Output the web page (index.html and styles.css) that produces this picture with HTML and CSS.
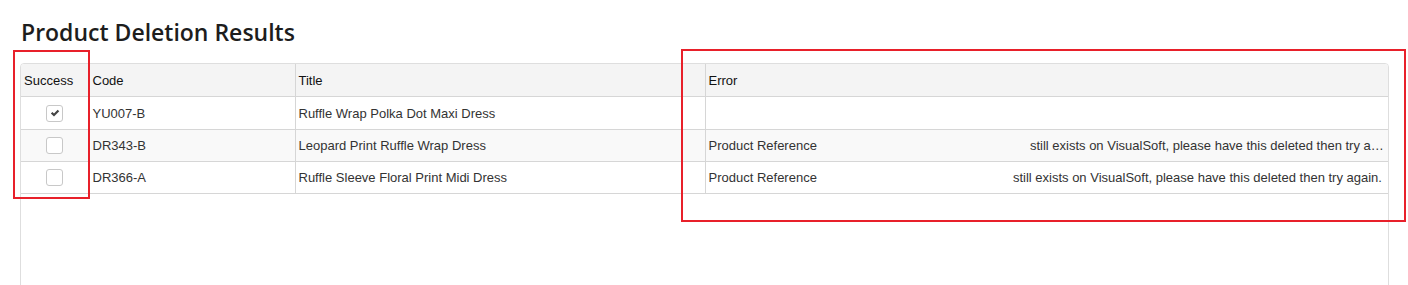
FILE: index.html
```html
<!DOCTYPE html>
<html lang="en">
<head>
    <meta charset="UTF-8">
    <meta name="viewport" content="width=device-width, initial-scale=1.0">
    <title>Product Deletion Results</title>
    <link rel="stylesheet" href="styles.css">
</head>
<body>
    <div class="page">
        <h1>Product Deletion Results</h1>

        <div class="grid">
            <table>
                <colgroup>
                    <col class="col-success">
                    <col class="col-code">
                    <col class="col-title">
                    <col>
                </colgroup>
                <thead>
                    <tr>
                        <th>Success</th>
                        <th>Code</th>
                        <th>Title</th>
                        <th>Error</th>
                    </tr>
                </thead>
                <tbody>
                    <tr>
                        <td class="center">
                            <span class="check">
                                <svg viewBox="0 0 12 12" width="10" height="10">
                                    <path d="M1 6.6 L2.9 4.7 L4.8 6.6 L9.2 2.1 L11.1 4 L4.8 10.3 Z" fill="#444"/>
                                </svg>
                            </span>
                        </td>
                        <td>YU007-B</td>
                        <td>Ruffle Wrap Polka Dot Maxi Dress</td>
                        <td></td>
                    </tr>
                    <tr>
                        <td class="center"><span class="check"></span></td>
                        <td>DR343-B</td>
                        <td>Leopard Print Ruffle Wrap Dress</td>
                        <td class="error">Product Reference<span class="hidden-ref wide"></span>still exists on VisualSoft, please have this deleted then try again.</td>
                    </tr>
                    <tr>
                        <td class="center"><span class="check"></span></td>
                        <td>DR366-A</td>
                        <td>Ruffle Sleeve Floral Print Midi Dress</td>
                        <td class="error">Product Reference<span class="hidden-ref"></span>still exists on VisualSoft, please have this deleted then try again.</td>
                    </tr>
                </tbody>
            </table>
        </div>

        <!-- highlight boxes -->
        <div class="mark mark-success"></div>
        <div class="mark mark-error"></div>
    </div>
</body>
</html>
```

FILE: styles.css
```css
body, h1, table {
    margin: 0;
    padding: 0;
    box-sizing: border-box;
}

body {
    background: #fff;
    font-family: "Liberation Sans", Arial, sans-serif;
    color: #333;
    overflow: hidden;
}

.page {
    position: relative;
    padding: 16px 19px 0 20px;
}

h1 {
    font-family: "Open Sans", "Noto Sans", sans-serif;
    font-size: 23px;
    font-weight: 600;
    line-height: 32px;
    color: #1d1d1d;
    margin-left: 1px;
    margin-bottom: 15px;
}

/* Grid */
.grid {
    border: 1px solid #dedede;
    border-radius: 4px;
    height: 260px;
    overflow: hidden;
}

table {
    width: 100%;
    border-collapse: collapse;
    table-layout: fixed;
    font-size: 13px;
}

.col-success { width: 68px; }
.col-code { width: 206px; }
.col-title { width: 410px; }

th, td {
    text-align: left;
    padding: 0 2px 0 3px;
    white-space: nowrap;
    overflow: hidden;
    text-overflow: ellipsis;
    border-bottom: 1px solid #d6d6d6;
    border-left: 1px solid #d6d6d6;
}

th:first-child, td:first-child {
    border-left: none;
}

th {
    background: #f4f4f4;
    color: #111;
    font-weight: normal;
    height: 32px;
}

td {
    height: 31px;
}

tbody tr:first-child td {
    height: 32px;
}

tbody tr:nth-child(even) td {
    background: #f9f9f9;
}

td.center {
    text-align: center;
    padding: 0;
}

/* Checkbox */
.check {
    display: inline-flex;
    align-items: center;
    justify-content: center;
    width: 15px;
    height: 15px;
    border: 1px solid #c8c8c8;
    border-radius: 3px;
    background: #fff;
    vertical-align: middle;
}

/* Blanked-out product reference */
.hidden-ref {
    display: inline-block;
    width: 196px;
}

.hidden-ref.wide {
    width: 213px;
}

/* Red highlight boxes */
.mark {
    position: absolute;
    border: 2px solid #e8202a;
    pointer-events: none;
}

.mark-success {
    left: 13px;
    top: 50px;
    width: 73px;
    height: 145px;
}

.mark-error {
    left: 681px;
    top: 49px;
    width: 721px;
    height: 169px;
}
```
